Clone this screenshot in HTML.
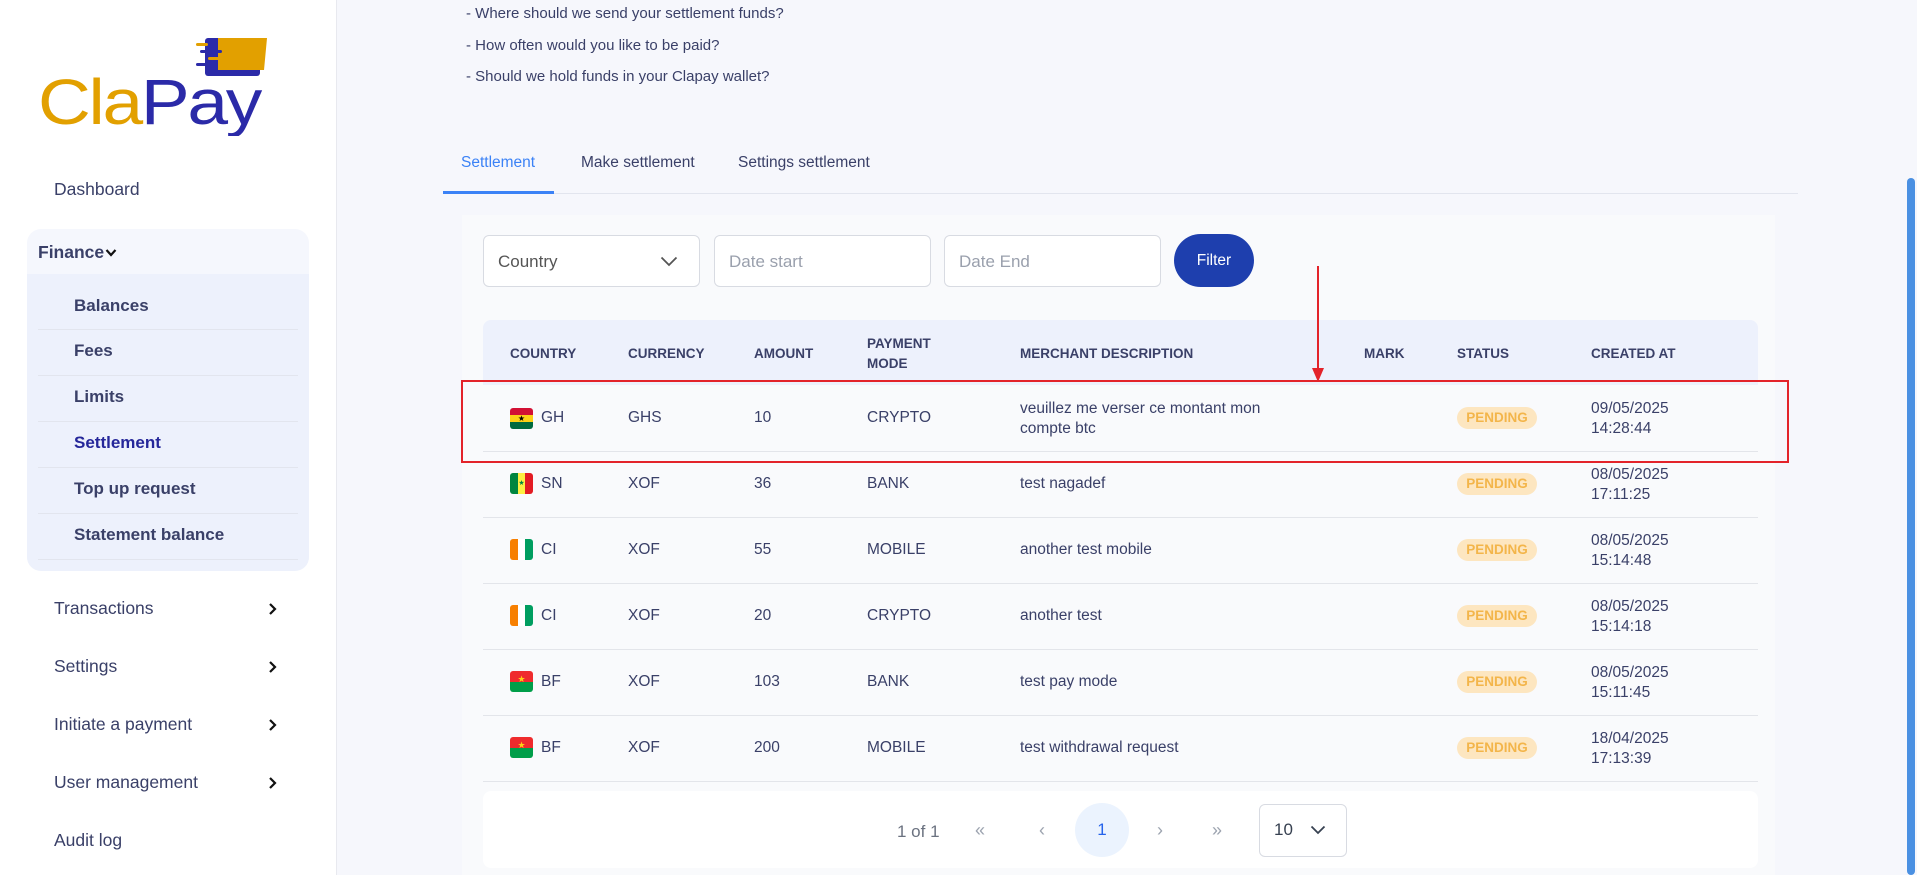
<!DOCTYPE html>
<html><head><meta charset="utf-8"><style>
*{margin:0;padding:0;box-sizing:border-box}
body{width:1917px;height:875px;overflow:hidden;background:#f6f7fc;font-family:"Liberation Sans",sans-serif;color:#3a4068;position:relative}
.a{position:absolute;white-space:nowrap}
.sb{position:absolute;left:0;top:0;width:337px;height:875px;background:#fff;border-right:1px solid #e8e9ef}
.fin{position:absolute;left:27px;top:229px;width:282px;height:342px;background:#f5f7fd;border-radius:14px;overflow:hidden}
.sub{position:absolute;left:0;top:45px;width:282px;height:297px;background:#edf1fc}
.si{position:absolute;left:47px;font-weight:bold;font-size:17px;color:#3a4068}
.sl{position:absolute;left:11px;width:260px;height:1px;background:#e2e5ee}
.mi{position:absolute;left:54px;font-size:17.5px;color:#3a4068}
.chev{position:absolute;left:268px}
.in{position:absolute;top:235px;height:52px;border:1px solid #d8dbe2;border-radius:6px;background:#fff;font-size:17px;color:#9aa0ad;padding:16px 14px}
.th{position:absolute;font-size:13.5px;font-weight:bold;color:#3a4068}
.td{position:absolute;font-size:15.5px;color:#3a4068}
.rl{position:absolute;left:483px;width:1275px;height:1px;background:#e3e5ea}
.pend{position:absolute;left:1457px;width:80px;height:22px;border-radius:11px;background:#fde6c0;color:#f3b54a;font-size:13.5px;font-weight:bold;text-align:center;line-height:22px}
.flag{position:absolute;left:510px;width:23px;height:21px;border-radius:3px;overflow:hidden}
</style></head><body>
<div class="sb">
<svg class="a" style="left:38px;top:36px" width="230" height="100" viewBox="0 0 230 100">
<rect x="167" y="2" width="55" height="38" rx="3" fill="#2b2aa8"/>
<polygon points="180,2 229,2 226,34 180,34" fill="#e2a000"/>
<rect x="158" y="7" width="12" height="3" rx="1.5" fill="#e2a000"/>
<rect x="162" y="14" width="22" height="3" rx="1.5" fill="#2b2aa8"/>
<rect x="170" y="21" width="16" height="3" rx="1.5" fill="#e2a000"/>
<rect x="158" y="27" width="20" height="3" rx="1.5" fill="#2b2aa8"/>
<text x="0" y="88" font-family="Liberation Sans,sans-serif" font-size="64" letter-spacing="-2" textLength="222" lengthAdjust="spacingAndGlyphs"><tspan fill="#e2a000">Cla</tspan><tspan fill="#2b2aa8">Pay</tspan></text>
</svg>
<div class="mi" style="top:179px">Dashboard</div>
<div class="fin">
<div class="a" style="left:11px;top:13px;font-weight:bold;font-size:17.5px;color:#3a4068">Finance</div>
<svg class="a" style="left:78px;top:19px" width="12" height="10"><path d="M1.5 2 L6 7 L10.5 2" stroke="#111" stroke-width="2.2" fill="none"/></svg>
<div class="sub">
<div class="si" style="top:22px">Balances</div><div class="sl" style="top:55px"></div>
<div class="si" style="top:67px">Fees</div><div class="sl" style="top:101px"></div>
<div class="si" style="top:113px">Limits</div><div class="sl" style="top:147px"></div>
<div class="si" style="top:159px;color:#25279a">Settlement</div><div class="sl" style="top:193px"></div>
<div class="si" style="top:205px">Top up request</div><div class="sl" style="top:239px"></div>
<div class="si" style="top:251px">Statement balance</div><div class="sl" style="top:285px"></div>
</div></div>
<div class="mi" style="top:598px">Transactions</div>
<div class="mi" style="top:656px">Settings</div>
<div class="mi" style="top:714px">Initiate a payment</div>
<div class="mi" style="top:772px">User management</div>
<div class="mi" style="top:830px">Audit log</div>
<svg class="chev" style="top:602px" width="10" height="14"><path d="M2 2 L7 7 L2 12" stroke="#111" stroke-width="2.2" fill="none"/></svg>
<svg class="chev" style="top:660px" width="10" height="14"><path d="M2 2 L7 7 L2 12" stroke="#111" stroke-width="2.2" fill="none"/></svg>
<svg class="chev" style="top:718px" width="10" height="14"><path d="M2 2 L7 7 L2 12" stroke="#111" stroke-width="2.2" fill="none"/></svg>
<svg class="chev" style="top:776px" width="10" height="14"><path d="M2 2 L7 7 L2 12" stroke="#111" stroke-width="2.2" fill="none"/></svg>
</div>

<div class="a" style="left:466px;top:5px;font-size:15px">- Where should we send your settlement funds?</div>
<div class="a" style="left:466px;top:37px;font-size:15px">- How often would you like to be paid?</div>
<div class="a" style="left:466px;top:68px;font-size:15px">- Should we hold funds in your Clapay wallet?</div>

<div class="a" style="left:461px;top:154px;font-size:15.5px;color:#3b82f6">Settlement</div>
<div class="a" style="left:581px;top:154px;font-size:15.5px">Make settlement</div>
<div class="a" style="left:738px;top:154px;font-size:15.5px">Settings settlement</div>
<div class="a" style="left:443px;top:193px;width:1355px;height:1px;background:#e2e5ee"></div>
<div class="a" style="left:443px;top:191px;width:111px;height:3px;background:#3b82f6"></div>

<div class="a" style="left:462px;top:215px;width:1313px;height:660px;background:#f9fafc"></div>
<div class="in" style="left:483px;width:217px;color:#555">Country
<svg class="a" style="left:176px;top:20px" width="18" height="11"><path d="M1.5 1.5 L9 9 L16.5 1.5" stroke="#555" stroke-width="1.8" fill="none"/></svg></div>
<div class="in" style="left:714px;width:217px">Date start</div>
<div class="in" style="left:944px;width:217px">Date End</div>
<div class="a" style="left:1174px;top:234px;width:80px;height:53px;border-radius:27px;background:#1e3fae;color:#fff;font-size:15.5px;text-align:center;line-height:53px">Filter</div>

<div class="a" style="left:483px;top:320px;width:1275px;height:65px;background:#edf1fc;border-radius:8px 8px 0 0"></div>
<div class="th" style="left:510px;top:346px">COUNTRY</div>
<div class="th" style="left:628px;top:346px">CURRENCY</div>
<div class="th" style="left:754px;top:346px">AMOUNT</div>
<div class="th" style="left:867px;top:334px;line-height:20px">PAYMENT<br>MODE</div>
<div class="th" style="left:1020px;top:346px">MERCHANT DESCRIPTION</div>
<div class="th" style="left:1364px;top:346px">MARK</div>
<div class="th" style="left:1457px;top:346px">STATUS</div>
<div class="th" style="left:1591px;top:346px">CREATED AT</div>

<div class="flag" style="top:408px"><div style="height:7px;background:#d21034"></div><div style="height:7px;background:#fcd116;text-align:center;font-size:8px;line-height:7px;color:#000">★</div><div style="height:7px;background:#006b3f"></div></div>
<div class="td" style="left:541px;top:409px">GH</div><div class="td" style="left:628px;top:409px">GHS</div><div class="td" style="left:754px;top:409px">10</div><div class="td" style="left:867px;top:409px">CRYPTO</div>
<div class="td" style="left:1020px;top:399px;line-height:20px">veuillez me verser ce montant mon<br>compte btc</div>
<div class="pend" style="top:407px">PENDING</div>
<div class="td" style="left:1591px;top:399px;line-height:20px">09/05/2025<br>14:28:44</div>
<div class="rl" style="top:451px"></div>

<div class="flag" style="top:473px;display:flex"><div style="width:8px;background:#00853f"></div><div style="width:7px;background:#fdef42;font-size:7px;line-height:21px;color:#00853f;text-align:center">★</div><div style="width:8px;background:#e31b23"></div></div>
<div class="td" style="left:541px;top:475px">SN</div><div class="td" style="left:628px;top:475px">XOF</div><div class="td" style="left:754px;top:475px">36</div><div class="td" style="left:867px;top:475px">BANK</div><div class="td" style="left:1020px;top:475px">test nagadef</div>
<div class="pend" style="top:473px">PENDING</div>
<div class="td" style="left:1591px;top:465px;line-height:20px">08/05/2025<br>17:11:25</div>
<div class="rl" style="top:517px"></div>

<div class="flag" style="top:539px;display:flex"><div style="width:8px;background:#f77f00"></div><div style="width:7px;background:#fff"></div><div style="width:8px;background:#009e60"></div></div>
<div class="td" style="left:541px;top:541px">CI</div><div class="td" style="left:628px;top:541px">XOF</div><div class="td" style="left:754px;top:541px">55</div><div class="td" style="left:867px;top:541px">MOBILE</div><div class="td" style="left:1020px;top:541px">another test mobile</div>
<div class="pend" style="top:539px">PENDING</div>
<div class="td" style="left:1591px;top:531px;line-height:20px">08/05/2025<br>15:14:48</div>
<div class="rl" style="top:583px"></div>

<div class="flag" style="top:605px;display:flex"><div style="width:8px;background:#f77f00"></div><div style="width:7px;background:#fff"></div><div style="width:8px;background:#009e60"></div></div>
<div class="td" style="left:541px;top:607px">CI</div><div class="td" style="left:628px;top:607px">XOF</div><div class="td" style="left:754px;top:607px">20</div><div class="td" style="left:867px;top:607px">CRYPTO</div><div class="td" style="left:1020px;top:607px">another test</div>
<div class="pend" style="top:605px">PENDING</div>
<div class="td" style="left:1591px;top:597px;line-height:20px">08/05/2025<br>15:14:18</div>
<div class="rl" style="top:649px"></div>

<div class="flag" style="top:671px"><div style="height:11px;background:#ef2b2d;text-align:center;font-size:9px;line-height:17px;color:#fcd116">★</div><div style="height:10px;background:#009e49"></div></div>
<div class="td" style="left:541px;top:673px">BF</div><div class="td" style="left:628px;top:673px">XOF</div><div class="td" style="left:754px;top:673px">103</div><div class="td" style="left:867px;top:673px">BANK</div><div class="td" style="left:1020px;top:673px">test pay mode</div>
<div class="pend" style="top:671px">PENDING</div>
<div class="td" style="left:1591px;top:663px;line-height:20px">08/05/2025<br>15:11:45</div>
<div class="rl" style="top:715px"></div>

<div class="flag" style="top:737px"><div style="height:11px;background:#ef2b2d;text-align:center;font-size:9px;line-height:17px;color:#fcd116">★</div><div style="height:10px;background:#009e49"></div></div>
<div class="td" style="left:541px;top:739px">BF</div><div class="td" style="left:628px;top:739px">XOF</div><div class="td" style="left:754px;top:739px">200</div><div class="td" style="left:867px;top:739px">MOBILE</div><div class="td" style="left:1020px;top:739px">test withdrawal request</div>
<div class="pend" style="top:737px">PENDING</div>
<div class="td" style="left:1591px;top:729px;line-height:20px">18/04/2025<br>17:13:39</div>
<div class="rl" style="top:781px"></div>

<div class="a" style="left:461px;top:380px;width:1328px;height:83px;border:2px solid #e3232a"></div>
<div class="a" style="left:1317px;top:266px;width:2px;height:104px;background:#e3232a"></div>
<svg class="a" style="left:1312px;top:368px" width="12" height="14"><path d="M0 0 L12 0 L6 14Z" fill="#e3232a"/></svg>

<div class="a" style="left:483px;top:791px;width:1275px;height:77px;background:#fff;border-radius:8px"></div>
<div class="a" style="left:897px;top:822px;font-size:17px;color:#6b7280">1 of 1</div>
<div class="a" style="left:975px;top:820px;font-size:18px;color:#9ca3af">«</div>
<div class="a" style="left:1039px;top:820px;font-size:18px;color:#9ca3af">‹</div>
<div class="a" style="left:1075px;top:803px;width:54px;height:54px;border-radius:27px;background:#ebf3fe;color:#2563eb;font-size:17px;text-align:center;line-height:54px">1</div>
<div class="a" style="left:1157px;top:820px;font-size:18px;color:#9ca3af">›</div>
<div class="a" style="left:1212px;top:820px;font-size:18px;color:#9ca3af">»</div>
<div class="a" style="left:1259px;top:804px;width:88px;height:53px;border:1px solid #d8dbe2;border-radius:6px;background:#fff"></div>
<div class="a" style="left:1274px;top:820px;font-size:17px;color:#374151">10</div>
<svg class="a" style="left:1310px;top:825px" width="16" height="10"><path d="M1.5 1.5 L8 8 L14.5 1.5" stroke="#374151" stroke-width="1.8" fill="none"/></svg>

<div class="a" style="left:1900px;top:0;width:17px;height:875px;background:#f6f7fc"></div>
<div class="a" style="left:1907px;top:178px;width:8px;height:697px;background:#4a90e2;border-radius:4px"></div>
</body></html>
